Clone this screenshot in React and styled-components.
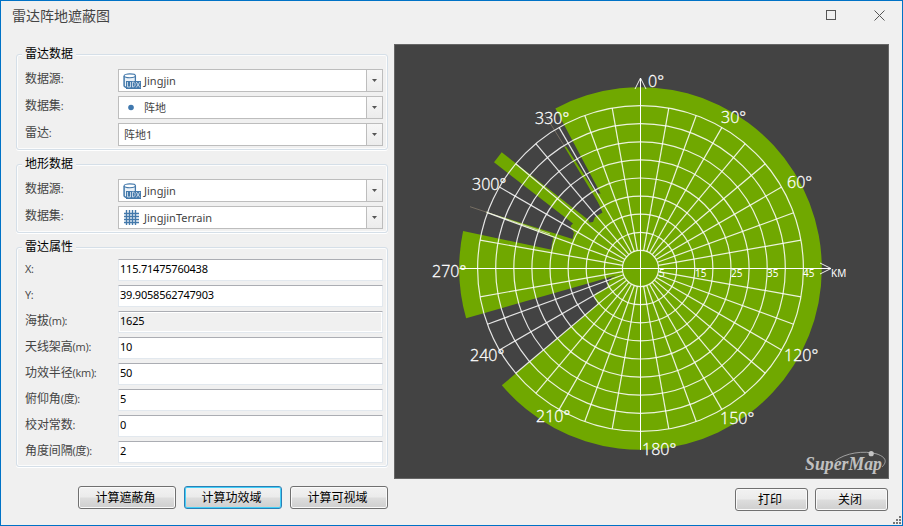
import React from "react";
import styled, { createGlobalStyle, css } from "styled-components";

const sans = '"Noto Sans", "Noto Sans CJK SC", sans-serif';
const cjk = '"Noto Sans CJK SC", sans-serif';

const Global = createGlobalStyle`
  * { box-sizing: border-box; }
  body { margin: 0; background: #f0f0f0; overflow: hidden; }
`;

const Window = styled.div`
  width: 903px;
  height: 526px;
  display: flex;
  flex-direction: column;
  background: #f0f0f0;
  border: 1px solid #0072c6;
  font: 12px ${cjk};
  color: #444;
  position: relative;
`;

const TitleBar = styled.header`
  height: 43px;
  flex: none;
  display: flex;
  justify-content: space-between;
  padding: 0 17px 15px 11px;
  align-items: center;
`;

const Title = styled.h1`
  margin: 0;
  font: 14px/20px ${cjk};
  color: #444;
`;

const WindowButtons = styled.div`
  display: flex;
  gap: 37px;
  svg { display: block; }
`;

const Body = styled.main`
  display: flex;
  gap: 6px;
  padding-left: 15px;
`;

const LeftColumn = styled.section`
  width: 372px;
  flex: none;
  padding-top: 10px;
`;

const RightColumn = styled.section`
  width: 495px;
  flex: none;
`;

const Group = styled.section`
  height: ${(p) => p.$height}px;
  margin-bottom: 14px;
  padding: 0 4px 0 8px;
  border: 1px solid #d5dfe8;
  border-radius: 3px;
  box-shadow: inset 0 0 0 1px #fcfcfc, 0 1px 0 #fff;
`;

const Legend = styled.h2`
  width: max-content;
  height: 18px;
  margin: -10px 0 ${(p) => p.$gap}px -3px;
  padding: 0 3px;
  background: #f0f0f0;
  font: 12px/16px ${cjk};
  color: #000;
`;

const Row = styled.label`
  display: flex;
  height: ${(p) => p.$pitch}px;
  align-items: flex-start;
`;

const Label = styled.span`
  width: 93px;
  flex: none;
  font: 12px/18px ${cjk};
  letter-spacing: -0.1px;
  color: #444;
`;

const Latin = styled.span`
  font: 11px/18px "Open Sans", ${sans};
  letter-spacing: -0.3px;
`;

const Combo = styled.div`
  width: 265px;
  height: 23px;
  flex: none;
  display: flex;
  align-items: center;
  border: 1px solid #bdbdbd;
  background: #fff;
`;

const ComboIcon = styled.span`
  width: 20px;
  height: 21px;
  flex: none;
  padding: 3px 0 0 4px;
  svg { display: block; }
`;

const ComboText = styled.span`
  flex: 1;
  padding-left: 5px;
  font: 11px/21px ${sans};
  color: #444;
  white-space: nowrap;
`;

const ComboArrow = styled.span`
  width: 16px;
  height: 21px;
  display: flex;
  align-items: center;
  justify-content: center;
  border-left: 1px solid #bdbdbd;
  background: linear-gradient(#f7f7f7, #ececec);
`;

const Input = styled.input`
  width: 265px;
  height: 22px;
  flex: none;
  padding: 0 1px 3px;
  border: 1px solid #e2e8ee;
  border-top-color: #abadb3;
  border-radius: 1px;
  background: #fff;
  font: 11px ${sans};
  letter-spacing: -0.22px;
  color: #000;
  outline: none;
  ${(p) => p.readOnly && css`background: #f0f0f0; box-shadow: inset 0 0 0 1px #fff;`}
`;

const Buttons = styled.div`
  display: flex;
  justify-content: flex-end;
  gap: ${(p) => p.$gap}px;
  margin: ${(p) => p.$margin};
`;

const Button = styled.button`
  width: ${(p) => p.$width}px;
  height: 23px;
  padding: 0 3px 1px 0;
  border: 1px solid ${(p) => (p.$focus ? "#2c7fb5" : "#707070")};
  border-radius: 3px;
  box-shadow: inset 0 0 0 1px ${(p) => (p.$focus ? "#43d0f8" : "#fafafa")};
  background: linear-gradient(#f2f2f2 0%, #ebebeb 48%, #dddddd 52%, #cfcfcf 100%);
  font: 12px/18px ${cjk};
  color: #000;
`;

const ChartPanel = styled.div`
  width: 495px;
  height: 435px;
  border: 1px solid #666;
  background: #434343;
  svg { display: block; }
`;

const Grip = styled.div`
  position: absolute;
  right: 0;
  bottom: 0;
  svg { display: block; }
`;

const CX = 640.5;
const CY = 268.5;
const STEP = 18.1;
const RANGE = 181.3;

const sector = (a, b) => {
  const pt = (deg) => {
    const t = (deg * Math.PI) / 180;
    return `${CX + RANGE * Math.sin(t)} ${CY - RANGE * Math.cos(t)}`;
  };
  return `M${CX} ${CY} L${pt(a)} A${RANGE} ${RANGE} 0 ${b - a > 180 ? 1 : 0} 1 ${pt(b)}Z`;
};

const angleLabels = [
  ["0°", 648, 87], ["30°", 721, 123], ["60°", 787, 188], ["120°", 784, 361],
  ["150°", 720, 424], ["180°", 642, 455], ["210°", 536, 422], ["240°", 470, 361],
  ["270°", 432, 277], ["300°", 472, 190], ["330°", 535, 124],
];

const rangeLabels = [["5", 659], ["15", 695], ["25", 731], ["35", 767], ["45", 803], ["KM", 831]];

function RadarChart() {
  return (
    <svg width="493" height="433" viewBox="395 45 493 433">
      <g fill="#70a800">
        <path d={sector(-28, 229.9)} />
        <path d={sector(254.1, 281.9)} />
        <circle cx={CX} cy={CY} r="27" />
        <path d="M640.5 268.5 L597 306 L597 303 L594.5 297 L596 293 L607 288.5 L607.5 284 L612 277.2Z" />
        <path d="M640.5 268.5 L551 252 L551.5 246.5 L553.3 237.5 L500 217.3 L500 216.2 L572.5 239 L574 233 L570.5 226 L573 223.5 L494 162.3 L501.7 152.3 L588.5 220 L589.5 222.5 L593 222 L595 217 L602.5 212.5 L598 202 L593.5 193.5 L602 193.5Z" />
        <path d="M564.5 147 L566 146.5 L601 201 L599 204Z" />
      </g>
      <path d="M470 206.7 L500 216.7 M545 115 L565 147" stroke="#756d62" fill="none" />
      <path d="M486 212 L550 234" stroke="#c8d59a" fill="none" />
      <g stroke="#fff" strokeWidth="1.2" strokeOpacity="0.86" fill="none">
        {Array.from({ length: 9 }, (_, i) => (
          <circle key={i} cx={CX} cy={CY} r={STEP * (i + 1)} />
        ))}
        {Array.from({ length: 36 }, (_, i) => {
          if (i % 9 === 0) return null;
          const t = (i * Math.PI) / 18;
          return (
            <line key={i} x1={CX + STEP * Math.sin(t)} y1={CY - STEP * Math.cos(t)}
              x2={CX + STEP * 9 * Math.sin(t)} y2={CY - STEP * 9 * Math.cos(t)} />
          );
        })}
      </g>
      <g stroke="#fff" fill="none">
        <path d="M640.5 78V450 M459.5 268.5H831" />
        <path d="M635 89L640.5 78L646 89 M820 263L831 268.5L820 274" strokeOpacity="0.9" />
      </g>
      <g fill="#fff" stroke="#fff" strokeWidth="0.3" fontFamily="'Open Sans', 'Noto Sans', sans-serif" fontSize="16" fontWeight="300">
        {angleLabels.map(([t, x, y]) => (
          <text key={t} x={x} y={y}>{t}</text>
        ))}
      </g>
      <g fill="#fff" fontFamily="'Noto Sans', sans-serif" fontSize="10">
        {rangeLabels.map(([t, x]) => (
          <text key={t} x={x} y="277">{t}</text>
        ))}
      </g>
      <g>
        <path d="M835 461 C845 453 864 450 877 454 C888 458 886 463 882 467" fill="none" stroke="#aaa" strokeWidth="0.9" />
        <circle cx="871.2" cy="453.7" r="2.6" fill="#c4c4c4" />
        <text x="805" y="469.5" fill="#c0c0c0" fontFamily="'Liberation Serif', serif" fontSize="18"
          fontWeight="700" fontStyle="italic" textLength="77" lengthAdjust="spacingAndGlyphs">SuperMap</text>
      </g>
    </svg>
  );
}

function DatabaseIcon() {
  return (
    <svg width="18" height="17" viewBox="0 0 18 17">
      <path d="M1 3V13C2 15 5 15.5 8 15H13V3" fill="#e9f1f8" />
      <path d="M1.1 3V13C2 14.6 4 15 6.5 15" fill="none" stroke="#4479ab" strokeWidth="1.5" />
      <path d="M12.4 3V8" stroke="#4479ab" strokeWidth="1.3" />
      <ellipse cx="6.8" cy="2.8" rx="5.7" ry="1.9" fill="#fff" stroke="#4479ab" strokeWidth="1.1" />
      <rect x="3" y="8" width="15" height="8" fill="#4479ab" />
      <path d="M4.5 9V14H7.5V9 M9.5 9V14C13 14 13 9 9.5 9 M13.2 9L17 14.5 M17 9L13.2 14.5" fill="none" stroke="#dfeaf4" strokeWidth="0.8" />
    </svg>
  );
}

function PointIcon() {
  return (
    <svg width="16" height="16">
      <circle cx="8" cy="7.5" r="2.8" fill="#3f78ae" />
    </svg>
  );
}

function GridIcon() {
  return (
    <svg width="16" height="16" stroke="#4479ab" strokeWidth="1.4">
      <path d="M1 3.5H16M1 6.5H16M1 9.5H16M1 12.5H16M3.5 0V15M6.5 0V15M9.5 0V15M12.5 0V15" />
    </svg>
  );
}

const icons = { database: DatabaseIcon, point: PointIcon, grid: GridIcon };

function ComboField({ label, icon, value }) {
  const Icon = icons[icon];
  return (
    <Row $pitch={27}>
      <Label>{label}<Latin>:</Latin></Label>
      <Combo>
        {Icon && <ComboIcon><Icon /></ComboIcon>}
        <ComboText>{value}</ComboText>
        <ComboArrow>
          <svg width="5" height="3"><path d="M0 0H5L2.5 3Z" fill="#555" /></svg>
        </ComboArrow>
      </Combo>
    </Row>
  );
}

const fields = [
  ["", "X:", "115.71475760438"],
  ["", "Y:", "39.9058562747903"],
  ["海拔", "(m):", "1625", true],
  ["天线架高", "(m):", "10"],
  ["功效半径", "(km):", "50"],
  ["俯仰角", "(度):", "5"],
  ["校对常数", ":", "0"],
  ["角度间隔", "(度):", "2"],
];

export default function App() {
  return (
    <Window>
      <Global />
      <TitleBar>
        <Title>雷达阵地遮蔽图</Title>
        <WindowButtons>
          <svg width="11" height="11"><rect x="0.5" y="0.5" width="9" height="9" fill="none" stroke="#555" /></svg>
          <svg width="11" height="11"><path d="M0.5 0.5L10.5 10.5M10.5 0.5L0.5 10.5" stroke="#555" /></svg>
        </WindowButtons>
      </TitleBar>
      <Body>
        <LeftColumn>
          <Group $height={96}>
            <Legend $gap={6}>雷达数据</Legend>
            <ComboField label="数据源" icon="database" value="Jingjin" />
            <ComboField label="数据集" icon="point" value="阵地" />
            <ComboField label="雷达" value="阵地1" />
          </Group>
          <Group $height={69}>
            <Legend $gap={6}>地形数据</Legend>
            <ComboField label="数据源" icon="database" value="Jingjin" />
            <ComboField label="数据集" icon="grid" value="JingjinTerrain" />
          </Group>
          <Group $height={220}>
            <Legend $gap={3}>雷达属性</Legend>
            {fields.map(([label, unit, value, readOnly]) => (
              <Row key={label + unit} $pitch={26}>
                <Label>{label}<Latin>{unit}</Latin></Label>
                <Input defaultValue={value} readOnly={!!readOnly} />
              </Row>
            ))}
          </Group>
          <Buttons $gap={8} $margin="19px 0 0">
            <Button $width={98}>计算遮蔽角</Button>
            <Button $width={98} $focus>计算功效域</Button>
            <Button $width={98}>计算可视域</Button>
          </Buttons>
        </LeftColumn>
        <RightColumn>
          <ChartPanel><RadarChart /></ChartPanel>
          <Buttons $gap={7} $margin="9px 1px 0 0">
            <Button $width={73}>打印</Button>
            <Button $width={73}>关闭</Button>
          </Buttons>
        </RightColumn>
      </Body>
      <Grip>
        <svg width="9" height="9" fill="#777">
          <path d="M6 0h2v2h-2zM3 3h2v2h-2zM6 3h2v2h-2zM0 6h2v2h-2zM3 6h2v2h-2zM6 6h2v2h-2z" />
        </svg>
      </Grip>
    </Window>
  );
}
